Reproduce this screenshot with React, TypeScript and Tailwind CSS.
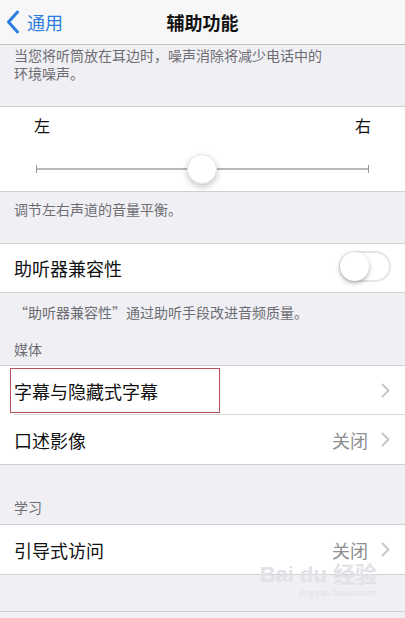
import React from "react";

const font = { fontFamily: '"Noto Sans CJK SC", "Noto Sans", sans-serif' };

function Chevron() {
  return (
    <svg width="9" height="15" viewBox="0 0 9 15" className="shrink-0">
      <path d="M1.5 1.5 L7.5 7.5 L1.5 13.5" fill="none" stroke="#c7c7cc" strokeWidth="2" strokeLinecap="round" strokeLinejoin="round" />
    </svg>
  );
}

function Row({ label, value, boxed, last }: { label: string; value?: string; boxed?: boolean; last?: boolean }) {
  return (
    <div className="relative flex h-[49px] items-center pl-[14px] pr-[15px]">
      {boxed && (
        <div className="absolute left-[10px] top-[2px] h-[45px] w-[210px] border border-[#b5525c]" />
      )}
      <span className="flex-1 text-[18px] leading-[24px] text-[#111]">{label}</span>
      {value && <span className="mr-[13px] text-[18px] leading-[24px] text-[#8e8e93]">{value}</span>}
      <Chevron />
      {!last && <div className="absolute bottom-0 left-[14px] right-0 h-px bg-[#d8d8dc]" />}
    </div>
  );
}

export default function App() {
  return (
    <div className="h-[618px] w-[405px] overflow-hidden bg-[#efeff4]" style={font}>
      {/* nav */}
      <div className="relative flex h-[45px] items-center justify-center border-b border-[#c2c2c6] bg-[#f7f7f7]">
        <div className="absolute left-[6px] top-0 flex h-full items-center">
          <svg width="14" height="24" viewBox="0 0 14 24">
            <path d="M11.5 2 L2.5 12 L11.5 22" fill="none" stroke="#2b7de0" strokeWidth="3" strokeLinecap="round" strokeLinejoin="round" />
          </svg>
          <span className="ml-[7px] text-[18px] text-[#2b7de0]">通用</span>
        </div>
        <span className="text-[18px] font-semibold text-[#111]">辅助功能</span>
      </div>

      {/* footer text top */}
      <div className="flex h-[61px] flex-col px-[14px] text-[14px] leading-[20px] text-[#6d6d72]">
        <span>当您将听筒放在耳边时，噪声消除将减少电话中的</span>
        <span className="mt-[-2px]">环境噪声。</span>
      </div>

      {/* slider section */}
      <div className="h-[86px] border-y border-[#d0d0d4] bg-white px-[34px]">
        <div className="flex justify-between pt-[8px] text-[16px] leading-[20px] text-[#111]">
          <span>左</span>
          <span>右</span>
        </div>
        <div className="relative mt-[19px] h-[30px]">
          <div className="absolute left-[2px] right-[2px] top-[14px] h-[2px] bg-[#b8b8bc]" />
          <div className="absolute left-[2px] top-[11px] h-[8px] w-px bg-[#9a9a9e]" />
          <div className="absolute right-[2px] top-[11px] h-[8px] w-px bg-[#9a9a9e]" />
          <div className="absolute left-[153px] top-0 h-[30px] w-[30px] rounded-full border border-[#e4e4e6] bg-white shadow-[0_3px_6px_rgba(0,0,0,0.22)]" />
        </div>
      </div>

      <div className="h-[51px] px-[14px] pt-[8px] text-[14px] leading-[18px] text-[#6d6d72]">
        调节左右声道的音量平衡。
      </div>

      {/* hearing aid row */}
      <div className="flex h-[50px] items-center border-y border-[#d0d0d4] bg-white pl-[14px] pr-[14px]">
        <span className="flex-1 text-[18px] leading-[24px] text-[#111]">助听器兼容性</span>
        <div className="relative mt-[-3px] h-[31px] w-[52px] rounded-full border-2 border-[#e6e6ea] bg-white">
          <div className="absolute left-[-1px] top-[-1px] h-[29px] w-[29px] rounded-full bg-white shadow-[0_2px_5px_rgba(0,0,0,0.3)]" />
        </div>
      </div>

      <div className="px-[14px] pt-[10px] text-[14px] leading-[18px] text-[#6d6d72]">
        “助听器兼容性”通过助听手段改进音频质量。
      </div>
      <div className="px-[14px] pt-[19px] text-[14px] leading-[18px] text-[#6d6d72]">媒体</div>

      <div className="mt-[7px] border-y border-[#d0d0d4] bg-white">
        <Row label="字幕与隐藏式字幕" boxed />
        <Row label="口述影像" value="关闭" last />
      </div>

      <div className="px-[14px] pt-[33px] text-[14px] leading-[18px] text-[#6d6d72]">学习</div>

      <div className="mt-[8px] border-y border-[#d0d0d4] bg-white">
        <Row label="引导式访问" value="关闭" last />
      </div>

      <div className="relative h-[37px] border-b border-[#d0d0d4]">
        <div className="absolute right-[28px] top-[-12px] flex flex-col items-end text-[#e2e2e6]">
          <span className="text-[22px] font-bold leading-[24px]" style={{ fontFamily: '"Liberation Sans", "Noto Sans CJK SC", sans-serif' }}>Bai du 经验</span>
          <span className="text-[9px] leading-[12px]">jingyan.baidu.com</span>
        </div>
      </div>
    </div>
  );
}
